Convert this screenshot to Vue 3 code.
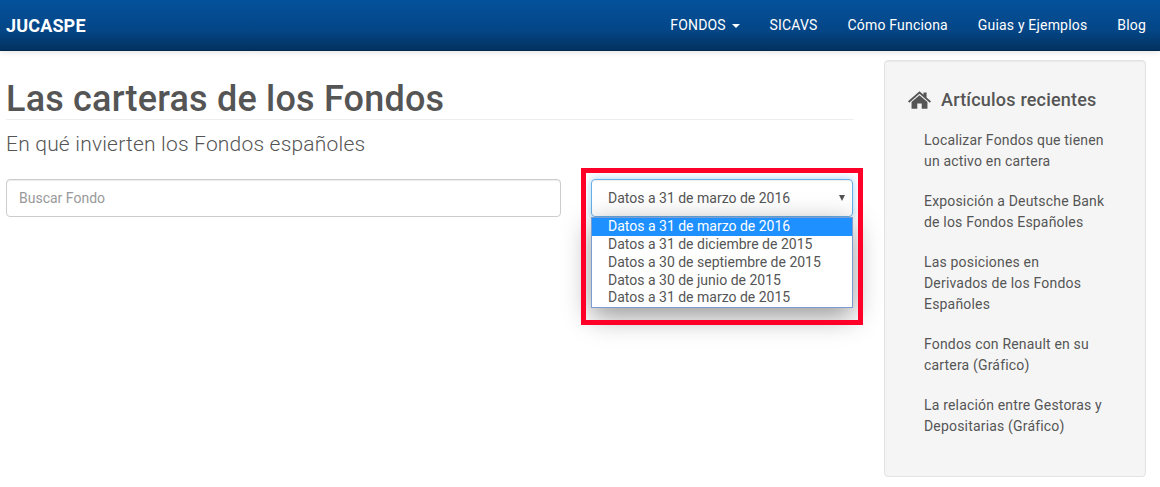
<script setup>
import { ref } from "vue";

const navLinks = ref(["SICAVS", "Cómo Funciona", "Guias y Ejemplos", "Blog"]);
const dates = ref([
  "Datos a 31 de marzo de 2016",
  "Datos a 31 de diciembre de 2015",
  "Datos a 30 de septiembre de 2015",
  "Datos a 30 de junio de 2015",
  "Datos a 31 de marzo de 2015",
]);
const articles = ref([
  "Localizar Fondos que tienen\nun activo en cartera",
  "Exposición a Deutsche Bank\nde los Fondos Españoles",
  "Las posiciones en\nDerivados de los Fondos\nEspañoles",
  "Fondos con Renault en su\ncartera (Gráfico)",
  "La relación entre Gestoras y\nDepositarias (Gráfico)",
]);
</script>

<template>
  <div class="page">
    <nav class="navbar">
      <a class="brand">JUCASPE</a>
      <ul class="nav">
        <li>FONDOS <span class="caret"></span></li>
        <li v-for="link in navLinks" :key="link">{{ link }}</li>
      </ul>
    </nav>

    <div class="content">
      <main class="main">
        <h1 class="title">Las carteras de los Fondos</h1>
        <p class="lead">En qué invierten los Fondos españoles</p>
        <div class="filters">
          <div class="search">Buscar Fondo</div>
          <div class="select-wrap">
            <div class="select">
              <span>{{ dates[0] }}</span>
              <span class="arrow"></span>
            </div>
            <ul class="options">
              <li v-for="(d, i) in dates" :key="d" :class="{ selected: i === 0 }">{{ d }}</li>
            </ul>
            <div class="highlight"></div>
          </div>
        </div>
      </main>

      <aside class="sidebar">
        <h4 class="side-title">
          <svg class="home" viewBox="0 0 26 20" width="23" height="18">
            <path d="M13 0 L17.5 4 V1.5 H21 V7.1 L26 11.5 L24.6 13 L13 3 L1.4 13 L0 11.5 Z" />
            <path d="M13 4.6 L22 12.3 V20 H15.5 V14 H10.5 V20 H4 V12.3 Z" />
          </svg>
          Artículos recientes
        </h4>
        <ul class="articles">
          <li v-for="a in articles" :key="a">{{ a }}</li>
        </ul>
      </aside>
    </div>
  </div>
</template>

<style>
html,
body {
  margin: 0;
  background: #fff;
}
</style>

<style scoped>
.page {
  width: 1160px;
  height: 487px;
  overflow: hidden;
  font-family: Roboto, "Liberation Sans", sans-serif;
  color: #555;
  background: #fff;
}

.navbar {
  height: 50px;
  display: flex;
  justify-content: space-between;
  align-items: center;
  padding: 0 14px 0 6px;
  background: linear-gradient(to bottom, #04519b 0%, #044687 60%, #02325f 100%);
  border-bottom: 1px solid #02284d;
  box-shadow: 0 1px 6px rgba(0, 0, 0, 0.12);
  color: #fff;
}

.brand {
  font-size: 18px;
  font-weight: 700;
  letter-spacing: 0.15px;
}

.nav {
  display: flex;
  gap: 30px;
  list-style: none;
  margin: 0;
  padding: 0;
  font-size: 14px;
  letter-spacing: 0.18px;
}

.caret {
  display: inline-block;
  width: 0;
  height: 0;
  margin-left: 2px;
  vertical-align: middle;
  border-top: 4px solid #fff;
  border-left: 4px solid transparent;
  border-right: 4px solid transparent;
}

.content {
  display: flex;
  padding: 9px 14px 0 6px;
}

.main {
  width: 848px;
  margin-right: 30px;
}

.title {
  margin: 19px 0 0;
  font-size: 36px;
  line-height: 40px;
  font-weight: 500;
  letter-spacing: 0.2px;
  border-bottom: 1px solid #eee;
}

.lead {
  margin: 10px 0 0;
  font-size: 21px;
  line-height: 28px;
  font-weight: 300;
  letter-spacing: 0.2px;
}

.filters {
  display: flex;
  gap: 30px;
  margin-top: 21px;
}

.search {
  box-sizing: border-box;
  width: 555px;
  height: 38px;
  padding: 0 12px;
  line-height: 36px;
  font-size: 14px;
  color: #999;
  border: 1px solid #ccc;
  border-radius: 4px;
  box-shadow: inset 0 1px 1px rgba(0, 0, 0, 0.075);
}

.select-wrap {
  position: relative;
  width: 262px;
}

.select {
  box-sizing: border-box;
  height: 38px;
  display: flex;
  justify-content: space-between;
  align-items: center;
  padding: 0 7px 0 16px;
  font-size: 14px;
  border: 1px solid #66afe9;
  border-radius: 4px;
  box-shadow: inset 0 1px 1px rgba(0, 0, 0, 0.075), 0 0 8px rgba(102, 175, 233, 0.6);
}

.arrow {
  width: 0;
  height: 0;
  border-top: 6px solid #555;
  border-left: 3px solid transparent;
  border-right: 3px solid transparent;
}

.options {
  position: absolute;
  top: 38px;
  left: 0;
  box-sizing: border-box;
  width: 262px;
  margin: 0;
  padding: 0;
  list-style: none;
  font-size: 14px;
  line-height: 17.85px;
  background: #fff;
  border: 1px solid #7a9cd3;
  box-shadow: 0 8px 26px rgba(0, 0, 0, 0.42);
}

.options li {
  height: 17.85px;
  padding-left: 16px;
}

.options .selected {
  background: #1e90ff;
  color: #fff;
}

.highlight {
  position: absolute;
  top: -11px;
  left: -10px;
  box-sizing: border-box;
  width: 282px;
  height: 157px;
  border: 5px solid #ff0029;
}

.sidebar {
  box-sizing: border-box;
  width: 262px;
  height: 417px;
  padding: 29px 19px 0 23px;
  background: #f5f5f5;
  border: 1px solid #e3e3e3;
  border-radius: 4px;
  box-shadow: inset 0 1px 1px rgba(0, 0, 0, 0.05);
}

.side-title {
  display: flex;
  align-items: center;
  gap: 10px;
  margin: 0;
  font-size: 18px;
  line-height: 20px;
  font-weight: 500;
  letter-spacing: 0.2px;
}

.home {
  fill: #555;
}

.articles {
  list-style: none;
  margin: 10px 0 0;
  padding: 0 0 0 16px;
  font-size: 14px;
  line-height: 21px;
  letter-spacing: 0.18px;
}

.articles li {
  padding: 9.5px 0;
  white-space: pre-line;
}
</style>
